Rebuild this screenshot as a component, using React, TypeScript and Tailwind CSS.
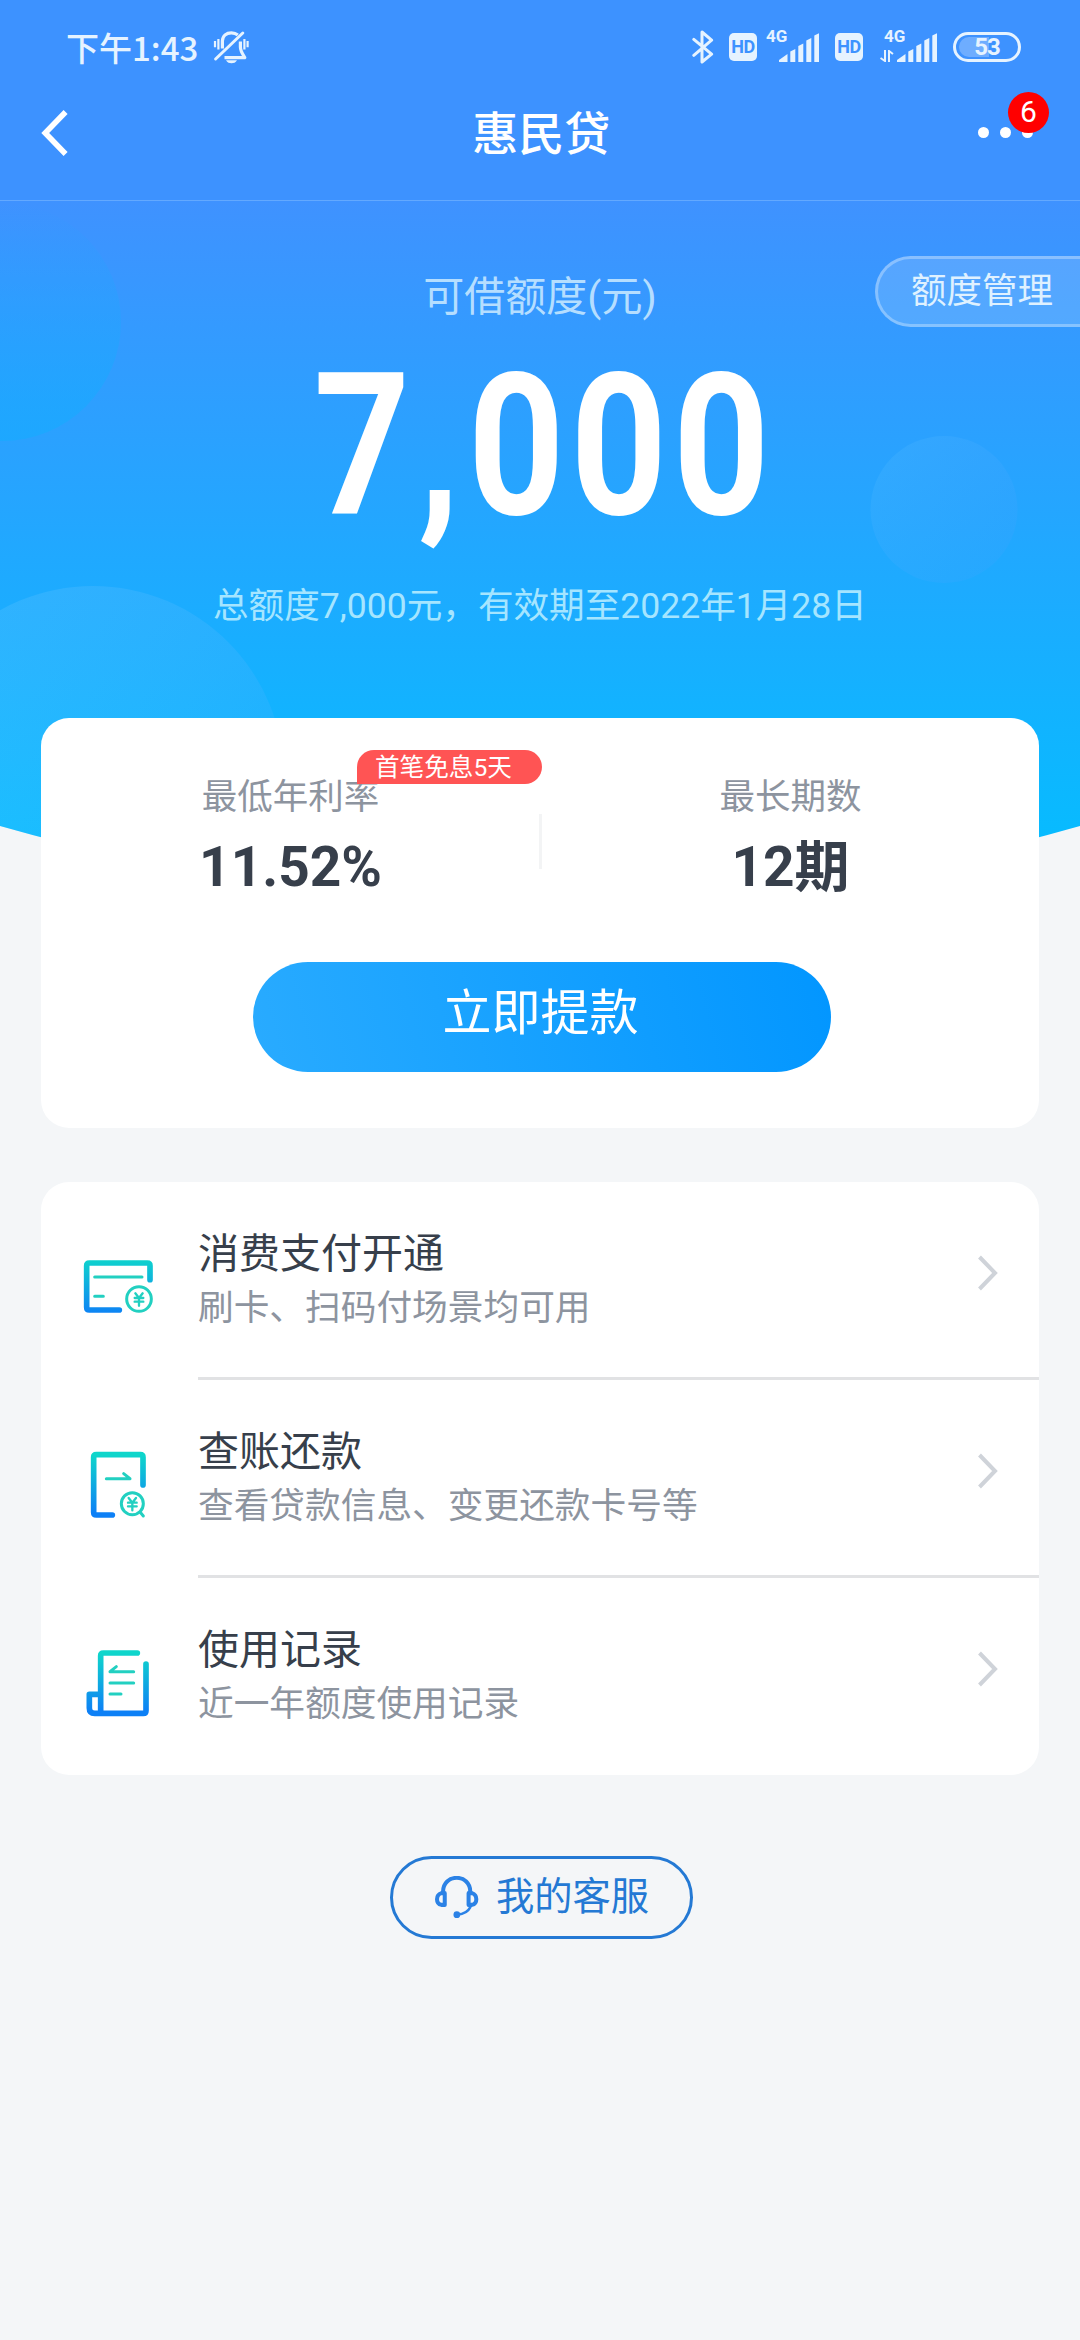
import React from 'react';

const SignalBars: React.FC = () => (
  <svg viewBox="0 0 40 29" className="w-[40px] h-[29px]" fill="#e6f3ff">
    <path d="M0 29V27L8.5 21V29Z" />
    <path d="M11.3 29V18.5L16.3 16V29Z" />
    <path d="M19.3 29V13L24.3 10.5V29Z" />
    <path d="M27.3 29V7.5L32.3 5V29Z" />
    <path d="M35.3 29V2.5L40.3 0V29Z" />
  </svg>
);

const HdBadge: React.FC = () => (
  <div className="flex h-[28px] w-[28px] items-center justify-center rounded-[5px] bg-[#e6f3ff] text-[18px] leading-none font-bold tracking-[-0.5px] text-[#3d92ff]">
    HD
  </div>
);

const BellOffIcon: React.FC = () => (
  <svg viewBox="0 0 36 34" className="h-[34px] w-[36px]" fill="none" stroke="#e6f3ff" strokeWidth="3.2">
    <path d="M9.4 18.5V11C9.6 5.6 13.4 2.8 18.4 2.8C21 2.8 23.2 3.6 24.8 5" />
    <path d="M27.4 11.5V17C27.4 21 29.6 24 31.8 27.6H11.5" strokeLinejoin="round" />
    <path d="M2.6 29L29.8 3" strokeLinecap="round" strokeWidth="3" />
    <path d="M13 30.2H24C22.5 32.6 20.8 33.2 18.5 33.2S14.5 32.6 13 30.2Z" fill="#e6f3ff" stroke="none" />
    <path d="M2 11V17.2M5.4 9V19.4M31.4 9V19.4M34.6 11V17.2" strokeWidth="2.2" />
  </svg>
);

const StatusBar: React.FC = () => (
  <div className="flex h-[94px] items-center pl-[66px] pr-[59px] text-[#e6f3ff]">
    <span className="text-[33px] leading-none font-medium font-['Noto_Sans_CJK_SC',sans-serif] whitespace-nowrap">下午1:43</span>
    <div className="ml-[15px]">
      <BellOffIcon />
    </div>
    <div className="ml-auto flex items-center">
      <svg viewBox="0 0 22 34" className="h-[34px] w-[22px]" fill="none" stroke="#e6f3ff" strokeWidth="3" strokeLinecap="round" strokeLinejoin="round">
        <path d="M1.8 9.4L19.6 24.2L10 32V2L19.6 10.2L1.8 25.4" />
      </svg>
      <div className="ml-[15px]">
        <HdBadge />
      </div>
      <div className="relative ml-[22px] h-[29px]">
        <span className="absolute -top-[5px] -left-[13px] text-[17px] leading-none font-bold">4G</span>
        <SignalBars />
      </div>
      <div className="ml-[16px]">
        <HdBadge />
      </div>
      <div className="relative ml-[34px] h-[29px]">
        <span className="absolute -top-[5px] -left-[13px] text-[17px] leading-none font-bold">4G</span>
        <svg viewBox="0 0 14 12" className="absolute bottom-0 -left-[17px] h-[12px] w-[14px]" fill="none" stroke="#e6f3ff" strokeWidth="2">
          <path d="M5 0V11L0.5 8M9 12V1L13 4" />
        </svg>
        <SignalBars />
      </div>
      <div className="relative ml-[16px] flex h-[30px] w-[68px] items-center justify-center rounded-full border-[3px] border-[#e6f3ff]">
        <div className="absolute top-[2px] left-[3px] h-[20px] w-[30px] rounded-l-full bg-[#6eadff]" />
        <span className="relative text-[24px] leading-none font-bold tracking-[-1px]">53</span>
      </div>
    </div>
  </div>
);

const NavBar: React.FC = () => (
  <div className="flex h-[107px] items-center justify-between border-b border-[#63a9ff] pl-[41px] pr-[47px] pb-[29px]">
    <svg viewBox="0 0 27 46" className="h-[46px] w-[27px]" fill="none" stroke="#fff" strokeWidth="5.6">
      <path d="M24.6 2L4.2 23L24.6 44" />
    </svg>
    <h1 className="pt-[2px] pl-[37px] text-[46px] leading-none font-medium text-white">惠民贷</h1>
    <div className="relative flex gap-[10.5px]">
      <i className="size-[11.5px] rounded-full bg-white" />
      <i className="size-[11.5px] rounded-full bg-white" />
      <i className="size-[11.5px] rounded-full bg-white" />
      <span className="absolute -top-[35px] -right-[16px] flex size-[41px] items-center justify-center rounded-full bg-[#ff0000] text-[30px] leading-none text-white">6</span>
    </div>
  </div>
);

const HeroBackground: React.FC = () => (
  <svg viewBox="0 0 1080 710" className="absolute inset-x-0 top-0 h-[710px] w-[1080px]">
    <defs>
      <linearGradient id="sky" x1="0" y1="0" x2="0" y2="640" gradientUnits="userSpaceOnUse">
        <stop offset="0" stopColor="#3f92ff" />
        <stop offset="1" stopColor="#07bbff" />
      </linearGradient>
      <linearGradient id="bubbleTop" x1="0" y1="0" x2="0" y2="1">
        <stop offset="0" stopColor="#14acff" stopOpacity="0" />
        <stop offset="1" stopColor="#14acff" stopOpacity="0.6" />
      </linearGradient>
      <linearGradient id="bubble" x1="0" y1="0.2" x2="1" y2="0.8">
        <stop offset="0" stopColor="#fff" stopOpacity="0.09" />
        <stop offset="1" stopColor="#6a9cff" stopOpacity="0.12" />
      </linearGradient>
      <linearGradient id="bubbleFade" x1="0.1" y1="0.1" x2="0.9" y2="0.9">
        <stop offset="0" stopColor="#5ac0ff" stopOpacity="0.2" />
        <stop offset="1" stopColor="#5a9cff" stopOpacity="0.12" />
      </linearGradient>
      <clipPath id="curve">
        <path d="M0 0H1080V625Q540 779 0 625Z" />
      </clipPath>
    </defs>
    <g clipPath="url(#curve)">
      <rect width="1080" height="710" fill="url(#sky)" />
      <circle cx="2" cy="121" r="119" fill="url(#bubbleTop)" />
      <circle cx="93" cy="576" r="191" fill="url(#bubble)" />
      <circle cx="944" cy="308.5" r="73.5" fill="url(#bubbleFade)" />
    </g>
  </svg>
);

const YenMark: React.FC<{ x: number; y: number }> = ({ x, y }) => (
  <path d={`M${x - 11} ${y - 17}L${x} ${y - 3}L${x + 11} ${y - 17}M${x} ${y - 3}V${y + 20}M${x - 13} ${y - 3}H${x + 13}M${x - 13} ${y + 8}H${x + 13}`} strokeWidth="7" />
);

const RowIcon: React.FC<{ outline: string; children: React.ReactNode }> = ({ outline, children }) => (
  <svg viewBox="0 0 240 240" className="size-[80px]" fill="none" strokeLinecap="round" strokeLinejoin="round">
    <defs>
      <linearGradient id="tealBlue" x1="0" y1="30" x2="0" y2="205" gradientUnits="userSpaceOnUse">
        <stop offset="0" stopColor="#0fd6cb" />
        <stop offset="1" stopColor="#0d80f6" />
      </linearGradient>
    </defs>
    <path d={outline} stroke="url(#tealBlue)" strokeWidth="17" />
    <g stroke="#22d0c1" strokeWidth="9">{children}</g>
  </svg>
);

const CardIcon = (
  <RowIcon outline="M210 98V56Q210 48 202 48H28Q20 48 20 56V181Q20 189 28 189H118">
    <path d="M44 90H186M44 148H70" />
    <circle cx="177" cy="156" r="37" />
    <YenMark x={177} y={156} />
  </RowIcon>
);

const BillIcon = (
  <RowIcon outline="M189 120V37Q189 29 181 29H49Q41 29 41 37V202Q41 210 49 210H97">
    <path d="M79 101H150L131 86" />
    <circle cx="157" cy="176" r="33" />
    <path d="M180 201L190 213" />
    <YenMark x={157} y={176} />
  </RowIcon>
);

const RecordIcon = (
  <RowIcon outline="M172 30H70Q62 30 62 38V209M198 63V203Q198 211 190 211H44Q28 211 28 195V154H60">
    <path d="M161 86H90L109 71M90 120H161M90 153H123" />
  </RowIcon>
);

const rows = [
  { title: '消费支付开通', desc: '刷卡、扫码付场景均可用', icon: CardIcon },
  { title: '查账还款', desc: '查看贷款信息、变更还款卡号等', icon: BillIcon },
  { title: '使用记录', desc: '近一年额度使用记录', icon: RecordIcon },
];

const App: React.FC = () => {
  return (
    <div className="h-[2340px] w-[1080px] overflow-hidden bg-[#f4f6f8] font-[Roboto,'Noto_Sans_CJK_SC',sans-serif]" lang="zh-CN">
      <header className="bg-[#3d92ff]">
        <StatusBar />
        <NavBar />
      </header>

      <main className="relative">
        <HeroBackground />

        {/* Available credit */}
        <section className="relative flex h-[517px] flex-col items-center pt-[69px] text-white">
          <p className="text-[41px] leading-[54px] text-[#b5deff]">可借额度(元)</p>
          <div className="mt-[22px] flex h-[200px] items-center">
            <span className="-mr-[9px] origin-center scale-x-[0.85] text-[198px] leading-[200px] font-bold tracking-[7px]">
              7<span className="mr-[3px] ml-[2px]">,</span>000
            </span>
          </div>
          <p className="mt-[36px] text-[35.6px] leading-[48px] whitespace-nowrap text-[#a5e5ff]">总额度7,000元，有效期至2022年1月28日</p>
          <button className="absolute top-[55px] right-0 flex h-[71px] w-[205px] items-center rounded-l-full border-[3px] border-r-0 border-white/30 bg-white/15 pl-[33px] text-[35.5px] leading-none whitespace-nowrap text-[#dff1ff]">
            额度管理
          </button>
        </section>

        {/* Rate card */}
        <section className="relative mx-[41px] flex h-[410px] flex-col items-center rounded-[28px] bg-white pt-[52px]">
          <div className="grid w-full grid-cols-2">
            <div className="flex flex-col items-center">
              <span className="text-[35.5px] leading-[54px] text-[#8d949f]">最低年利率</span>
              <span className="text-[55px] leading-[86px] font-bold text-[#373f4b]">11.52%</span>
            </div>
            <div className="flex flex-col items-center pl-[2px]">
              <span className="text-[35.5px] leading-[54px] text-[#8d949f]">最长期数</span>
              <span className="text-[55px] leading-[86px] font-bold text-[#373f4b]">12期</span>
            </div>
          </div>
          <div className="absolute top-[96px] left-[498px] h-[55px] w-[3px] bg-[#f3f4f5]" />
          <span className="absolute top-[32px] left-[316px] h-[34px] w-[185px] rounded-[17px] rounded-bl-none bg-[#ff5454] pl-[18px] text-[24.6px] leading-[35px] text-white">首笔免息5天</span>
          <button className="mt-[52px] ml-[4px] h-[110px] w-[578px] rounded-full bg-[linear-gradient(75deg,#29abff,#0296ff)] pr-[3px] pb-[8px] text-[49px] leading-none text-white">立即提款</button>
        </section>

        {/* Services */}
        <section className="mx-[41px] mt-[54px] h-[592.5px] rounded-[28px] bg-white">
          {rows.map((row, i) => (
            <div key={row.title} className="flex h-[198px] pl-[39px]">
              <div className="pt-[65px]">{row.icon}</div>
              <div className={i < rows.length - 1 ? 'ml-[38px] flex flex-1 border-b-[3px] border-[#e1e2e4]' : 'ml-[38px] flex flex-1'}>
                <div className="flex-1 pt-[45px]">
                  <p className="text-[41px] leading-[54px] text-[#373f4b]">{row.title}</p>
                  <p className="text-[35.7px] leading-[54px] text-[#8d949f]">{row.desc}</p>
                </div>
                <svg viewBox="0 0 20 36" className="mt-[73px] mr-[41px] h-[36px] w-[20px]" fill="none" stroke="#cfd3d9" strokeWidth="4">
                  <path d="M1.5 2L17 18L1.5 34" />
                </svg>
              </div>
            </div>
          ))}
        </section>

        <button className="relative left-[1.5px] mx-auto mt-[81px] flex h-[83px] w-[303px] items-center justify-center gap-[17px] rounded-full border-[3px] border-[#2479d4] text-[38.3px] leading-none text-[#2479d4]">
          <svg viewBox="192 147 134 128" className="h-[43px] w-[45px]" fill="none" stroke="#2b82e6" strokeWidth="12" strokeLinecap="round">
            <path d="M219 196C217 138 302 138 300 196" />
            <path d="M224 198V233H214Q201 230 201 216T214 198Z" strokeLinejoin="round" />
            <path d="M295 198V233H305Q318 230 318 216T305 198Z" strokeLinejoin="round" />
            <path d="M300 240Q290 260 262 262" strokeWidth="8" />
            <circle cx="260" cy="262" r="10" fill="#2b82e6" stroke="none" />
          </svg>
          我的客服
        </button>
      </main>
    </div>
  );
};

export default App;
